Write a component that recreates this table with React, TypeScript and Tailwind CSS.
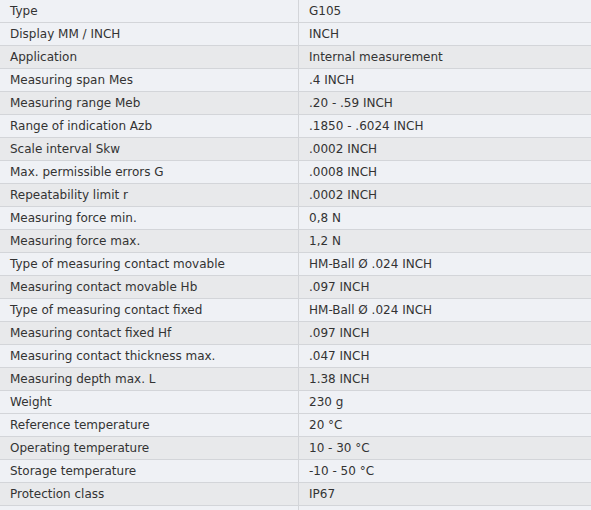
import React from 'react';

const rows: [string, string][] = [
  ['Type', 'G105'],
  ['Display MM / INCH', 'INCH'],
  ['Application', 'Internal measurement'],
  ['Measuring span Mes', '.4 INCH'],
  ['Measuring range Meb', '.20 - .59 INCH'],
  ['Range of indication Azb', '.1850 - .6024 INCH'],
  ['Scale interval Skw', '.0002 INCH'],
  ['Max. permissible errors G', '.0008 INCH'],
  ['Repeatability limit r', '.0002 INCH'],
  ['Measuring force min.', '0,8 N'],
  ['Measuring force max.', '1,2 N'],
  ['Type of measuring contact movable', 'HM-Ball Ø .024 INCH'],
  ['Measuring contact movable Hb', '.097 INCH'],
  ['Type of measuring contact fixed', 'HM-Ball Ø .024 INCH'],
  ['Measuring contact fixed Hf', '.097 INCH'],
  ['Measuring contact thickness max.', '.047 INCH'],
  ['Measuring depth max. L', '1.38 INCH'],
  ['Weight', '230 g'],
  ['Reference temperature', '20 °C'],
  ['Operating temperature', '10 - 30 °C'],
  ['Storage temperature', '-10 - 50 °C'],
  ['Protection class', 'IP67'],
  ['', ''],
];

// rows that show the darker grey in the screenshot
const dark = new Set([2, 4, 6, 8, 10, 12, 14, 16, 19, 21]);

export default function App() {
  return (
    <div className="w-[591px] h-[510px] overflow-hidden bg-white font-['DejaVu_Sans',sans-serif] text-[12px] text-[#333]">
      <div className="border-t border-[#d3d5d9] -mt-px">
        {rows.map(([label, value], i) => (
          <div
            key={i}
            className={`flex h-[23px] border-b border-[#d3d5d9] ${dark.has(i) ? 'bg-[#e8e9eb]' : 'bg-[#eff1f5]'}`}
          >
            <div className="w-[299px] shrink-0 border-r border-[#d3d5d9] pl-[10px] flex items-center">{label}</div>
            <div className="flex-1 pl-[10px] flex items-center">{value}</div>
          </div>
        ))}
      </div>
    </div>
  );
}
